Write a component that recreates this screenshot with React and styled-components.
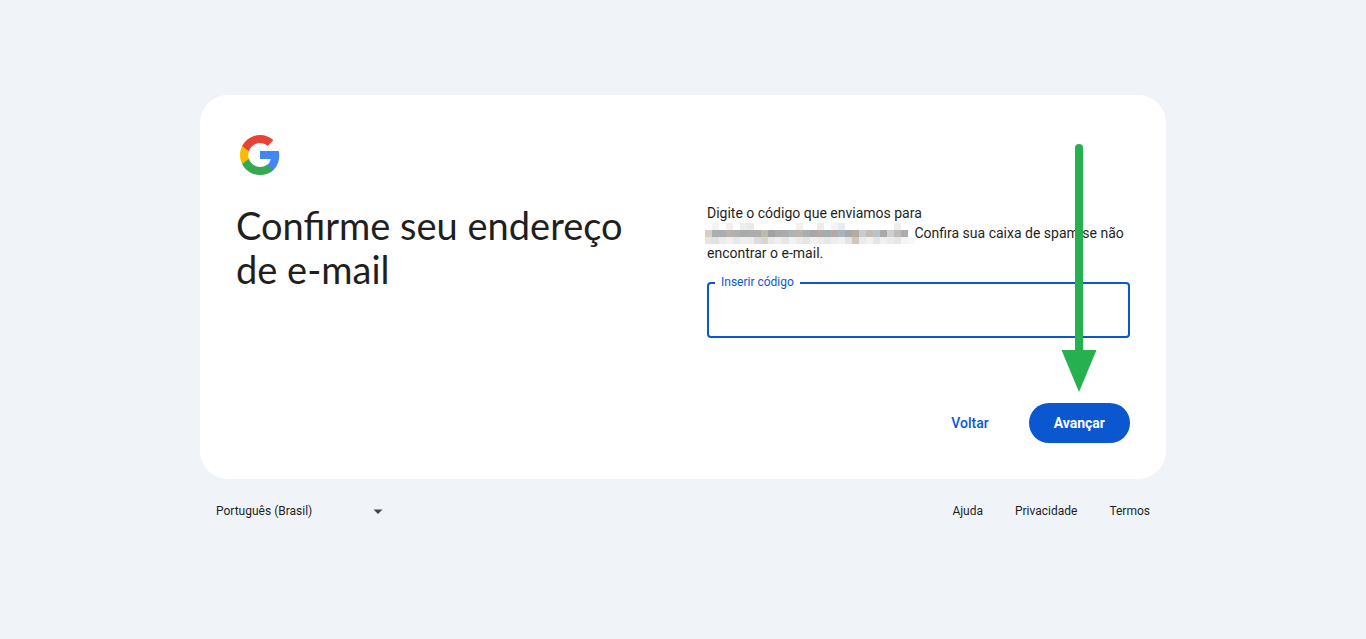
import React, { useState } from 'react';
import styled, { createGlobalStyle } from 'styled-components';

const GlobalStyle = createGlobalStyle`
  * {
    box-sizing: border-box;
  }
  body {
    margin: 0;
    background: #f0f4f9;
    color: #1f1f1f;
    font-family: Roboto, sans-serif;
    font-size: 14px;
    line-height: 20px;
  }
  button, input, select {
    font: inherit;
  }
`;

const Page = styled.div`
  min-height: 100vh;
  display: flex;
  flex-direction: column;
  justify-content: center;
  padding: 0 24px;

  @media (min-width: 1100px) {
    padding: 0 200px;
  }
`;

const Card = styled.main`
  background: #fff;
  border-radius: 28px;
  padding: 36px;
`;

const Columns = styled.div`
  display: grid;
  grid-template-columns: 1fr 1fr;
  column-gap: 48px;
  margin-top: 24px;
`;

const Title = styled.h1`
  margin: 0;
  font-family: Lato, sans-serif;
  font-size: 38px;
  line-height: 44px;
  font-weight: 400;
`;

const Message = styled.p`
  margin: 0 0 19px;
`;

const Redacted = styled.svg`
  width: 210px;
  height: 21px;
  margin: -3px -4px -1px -2px;
  vertical-align: middle;
`;

const Field = styled.div`
  position: relative;
`;

const FieldLabel = styled.label`
  position: absolute;
  top: -8px;
  left: 8px;
  padding: 0 6px;
  background: #fff;
  color: #0b57d0;
  font-size: 12px;
  line-height: 16px;
`;

const CodeInput = styled.input`
  display: block;
  width: 100%;
  height: 56px;
  padding: 0 14px;
  border: 2px solid #0b57d0;
  border-radius: 4px;
  background: transparent;
  font-size: 16px;
  outline: none;
`;

const Actions = styled.div`
  display: flex;
  justify-content: flex-end;
  gap: 24px;
  margin-top: 65px;
`;

const Button = styled.button`
  height: 40px;
  padding: 0 ${({ $filled }) => ($filled ? '25px' : '16px')};
  border: none;
  border-radius: 20px;
  background: ${({ $filled }) => ($filled ? '#0b57d0' : 'transparent')};
  color: ${({ $filled }) => ($filled ? '#fff' : '#0b57d0')};
  font-weight: ${({ $filled }) => ($filled ? 700 : 500)};
  cursor: pointer;
`;

const NextStep = styled.div`
  position: relative;
`;

const Arrow = styled.svg`
  position: absolute;
  bottom: 51px;
  left: 50%;
  width: 36px;
  height: 248px;
  margin-left: -18px;
  pointer-events: none;
`;

const Footer = styled.footer`
  display: flex;
  justify-content: space-between;
  align-items: center;
  padding: 16px 0 17px;
  font-size: 12px;
`;

const Language = styled.div`
  display: grid;
  align-items: center;
  width: 199px;

  > * {
    grid-area: 1 / 1;
  }
  svg {
    justify-self: end;
    margin-right: 16px;
    pointer-events: none;
  }
`;

const LanguageSelect = styled.select`
  appearance: none;
  width: 100%;
  height: 32px;
  padding: 0 16px;
  border: none;
  background: transparent;
  color: #1f1f1f;
`;

const Links = styled.nav`
  display: flex;
  gap: 32px;
  padding-right: 16px;
`;

const FooterLink = styled.a`
  color: #1f1f1f;
  text-decoration: none;
`;

const CELL = 7;

const MOSAIC = [
  '#fff #f4f4f4 #fff #f1f1f2 #fff #eeeeef #e9eaea #fff #fff #fff #fff #fff #fff #f1f1f1 #fff #fff #f0ebec #fff #f3f3f4 #e8ebee #fff #fff #fff #fff #fff #fff #fff #efedee #fff',
  '#d9cdc6 #a9aeae #a9adb3 #b9b0ab #adb1b0 #a7acab #acacac #adabab #bdbbae #9fa1a6 #a9a9aa #aaadac #b0b3b5 #b9b1ac #a9afb0 #a7a7a9 #b3a8a3 #a5acad #b3aaa4 #aab4c1 #a8a8aa #b4aba5 #c5ccd6 #c4bbb4 #b9c3ca #a8a7aa #cfcfd0 #c0bbb7 #adacaf',
  '#e7e4e2 #e2e2e2 #ececed #f1f0f0 #e8e8e8 #efefef #ededed #dddcdc #d7d6cc #e9e9ea #eeeeee #e6e6e7 #f2f2f2 #ebebeb #e5e6e6 #f0f0f0 #ededee #e8e8e8 #eeeeee #f1f1f1 #e4e4e5 #cfc6c0 #e9ebee #f2f1f0 #e3e6e8 #f0f0f0 #ebebeb #e6e6e6 #f5f5f5 #f8f8f8',
].map((row) => row.split(' '));

const Logo = () => (
  <svg width="48" height="48" viewBox="-4 0 48 48" display="block" aria-hidden="true">
    <path fill="#4285F4" d="M39.2 24.45c0-1.55-.16-3.04-.43-4.45H20v8h10.73c-.45 2.53-1.86 4.68-4 6.11v5.05h6.5c3.78-3.48 5.97-8.62 5.97-14.71z" />
    <path fill="#34A853" d="M20 44c5.4 0 9.92-1.79 13.24-4.84l-6.5-5.05C24.95 35.3 22.67 36 20 36c-5.19 0-9.59-3.51-11.15-8.23h-6.7v5.2C5.43 39.51 12.18 44 20 44z" />
    <path fill="#FABB05" d="M8.85 27.77c-.4-1.19-.62-2.46-.62-3.77s.22-2.58.62-3.77v-5.2h-6.7C.78 17.73 0 20.77 0 24s.78 6.27 2.14 8.97l6.71-5.2z" />
    <path fill="#E94235" d="M20 12c2.93 0 5.55 1.01 7.62 2.98l5.76-5.76C29.92 5.98 25.39 4 20 4 12.18 4 5.43 8.49 2.14 15.03l6.7 5.2C10.41 15.51 14.81 12 20 12z" />
  </svg>
);

const HiddenAddress = () => (
  <Redacted viewBox="0 0 210 21" shapeRendering="crispEdges" aria-hidden="true">
    {MOSAIC.map((row, y) =>
      row.map((fill, x) => (
        <rect key={`${x}-${y}`} x={x * CELL} y={y * CELL} width={CELL} height={CELL} fill={fill} />
      ))
    )}
  </Redacted>
);

const App = () => {
  const [code, setCode] = useState('');

  return (
    <>
      <GlobalStyle />
      <Page>
        <Card>
          <Logo />
          <Columns>
            <Title>Confirme seu endereço de e-mail</Title>
            <form onSubmit={(e) => e.preventDefault()}>
              <Message>
                Digite o código que enviamos para<br />
                <HiddenAddress /> Confira sua caixa de spam se não encontrar o e-mail.
              </Message>
              <Field>
                <CodeInput id="code" type="text" value={code} onChange={(e) => setCode(e.target.value)} />
                <FieldLabel htmlFor="code">Inserir código</FieldLabel>
              </Field>
              <Actions>
                <Button type="button">Voltar</Button>
                <NextStep>
                  <Button type="submit" $filled>Avançar</Button>
                  <Arrow viewBox="0 0 36 248" aria-hidden="true">
                    <path d="M18 4V210" stroke="#26b050" strokeWidth="8" strokeLinecap="round" />
                    <path d="M0.5 206H35.5L18 248z" fill="#26b050" />
                  </Arrow>
                </NextStep>
              </Actions>
            </form>
          </Columns>
        </Card>
        <Footer>
          <Language>
            <LanguageSelect aria-label="Idioma" defaultValue="pt-BR">
              <option value="pt-BR">Português (Brasil)</option>
            </LanguageSelect>
            <svg width="10" height="5" viewBox="0 0 10 5" aria-hidden="true">
              <path d="M0.5 0.5h9L5 5z" fill="#444746" />
            </svg>
          </Language>
          <Links>
            <FooterLink href="#ajuda">Ajuda</FooterLink>
            <FooterLink href="#privacidade">Privacidade</FooterLink>
            <FooterLink href="#termos">Termos</FooterLink>
          </Links>
        </Footer>
      </Page>
    </>
  );
};

export default App;
